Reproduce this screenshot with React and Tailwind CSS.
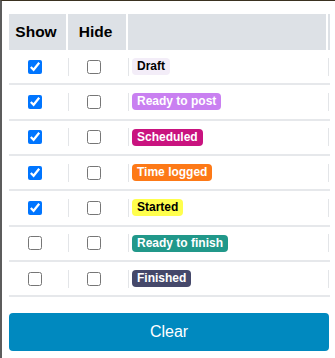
import React from "react";

const rows = [
  { label: "Draft", show: true, bg: "bg-[#f3edf8]", text: "text-black" },
  { label: "Ready to post", show: true, bg: "bg-[#c980f1]", text: "text-white" },
  { label: "Scheduled", show: true, bg: "bg-[#c9137f]", text: "text-white" },
  { label: "Time logged", show: true, bg: "bg-[#fd7917]", text: "text-white" },
  { label: "Started", show: true, bg: "bg-[#ffff4d]", text: "text-black" },
  { label: "Ready to finish", show: false, bg: "bg-[#21988a]", text: "text-white" },
  { label: "Finished", show: false, bg: "bg-[#45486a]", text: "text-white" },
];

export default function App() {
  return (
    <div className="w-[335px] h-[358px] bg-white border-l-2 border-t border-l-[#5c5c5c] border-t-[#3a3120] pl-[7px] pt-[13px] font-['Liberation_Sans',Arial,sans-serif] overflow-hidden">
      <div className="w-[321px]">
        <div className="grid grid-cols-[57px_58px_198px_2px] gap-x-[2px] h-[36px]">
          <div className="bg-[#dde1e6] flex items-center justify-center pr-[3px] text-[15.5px] font-bold text-black">Show</div>
          <div className="bg-[#dde1e6] flex items-center justify-center pr-[3px] text-[15.5px] font-bold text-black">Hide</div>
          <div className="bg-[#dde1e6]"></div>
          <div className="bg-[#dde1e6]"></div>
        </div>
        {rows.map((r) => (
          <div key={r.label} className="grid grid-cols-[57px_58px_198px_2px] gap-x-[2px] h-[35.33px] border-b-2 border-[#e6e8eb] items-center">
            <div className="flex items-center pl-[18.5px]">
              <input type="checkbox" defaultChecked={r.show} className="m-0 w-[14px] h-[14px]" />
            </div>
            <div className="flex items-center border-l-[1.5px] border-[#e3e5e8] h-[18px] pl-[18px]">
              <input type="checkbox" className="m-0 w-[14px] h-[14px]" />
            </div>
            <div className="flex items-center border-l-[1.5px] border-[#e3e5e8] h-[18px] pl-[3px]">
              <span className={`${r.bg} ${r.text} h-[17px] leading-[17px] px-[5px] rounded-[4px] text-[12px] font-bold`}>{r.label}</span>
            </div>
            <div className="border-l-[1.5px] border-[#e3e5e8] h-[18px]"></div>
          </div>
        ))}
        <button className="mt-[16px] w-[320px] h-[38px] bg-[#0089bf] rounded-[4px] text-white text-[16px]">Clear</button>
      </div>
    </div>
  );
}
